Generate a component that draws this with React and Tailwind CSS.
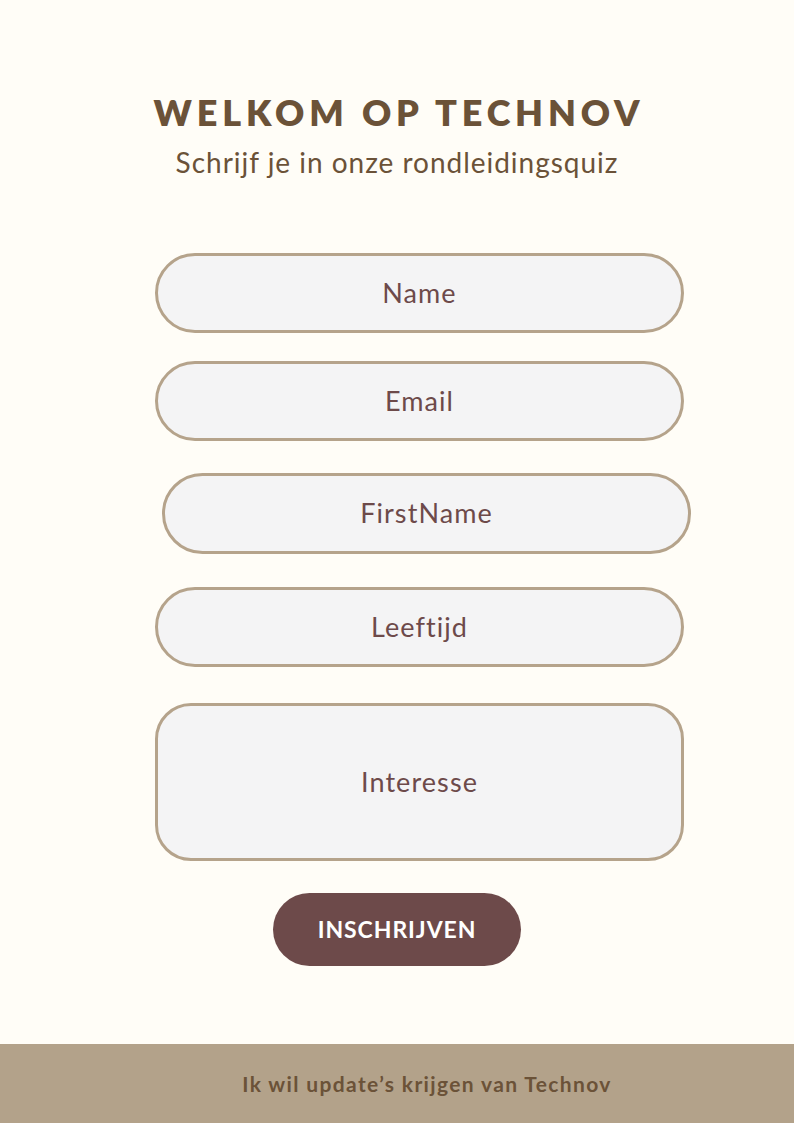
import React from "react";

const fields = [
  { label: "Name", ml: "ml-[155px]", mt: "mt-[73px]", h: "h-[80px]" },
  { label: "Email", ml: "ml-[155px]", mt: "mt-[28px]", h: "h-[80px]" },
  { label: "FirstName", ml: "ml-[162px]", mt: "mt-[32px]", h: "h-[81px]" },
  { label: "Leeftijd", ml: "ml-[155px]", mt: "mt-[33px]", h: "h-[80px]" },
];

export default function App() {
  return (
    <div className="w-[794px] h-[1123px] bg-[#fffdf7] flex flex-col font-['Lato',sans-serif] overflow-hidden">
      <div className="flex-1 flex flex-col">
        <h1 className="mt-[90px] text-center text-[36px] leading-[44px] font-extrabold tracking-[0.135em] text-[#6b5238] pl-[4px]">
          WELKOM OP TECHNOV
        </h1>
        <p className="mt-[10px] text-center text-[28px] leading-[36px] text-[#6b5238] tracking-[0.035em]">
          Schrijf je in onze rondleidingsquiz
        </p>

        {fields.map((f) => (
          <div
            key={f.label}
            className={`${f.ml} ${f.mt} ${f.h} w-[529px] rounded-full border-[3px] border-[#b5a38b] bg-[#f4f4f5] flex items-center justify-center text-[27px] text-[#6d4a4a] tracking-[0.04em]`}
          >
            {f.label}
          </div>
        ))}

        <div className="ml-[155px] mt-[36px] h-[158px] w-[529px] rounded-[36px] border-[3px] border-[#b5a38b] bg-[#f4f4f5] flex items-center justify-center text-[27px] text-[#6d4a4a] tracking-[0.04em]">
          Interesse
        </div>

        <button className="mx-auto mt-[32px] w-[248px] h-[73px] rounded-full bg-[#6d4a4a] text-white text-[23px] font-bold tracking-[0.04em]">
          INSCHRIJVEN
        </button>
      </div>

      <div className="h-[79px] bg-[#b3a28a] flex items-center justify-center pl-[60px]">
        <span className="text-[21px] font-bold text-[#6b5238] tracking-[0.065em]">
          Ik wil update’s krijgen van Technov
        </span>
      </div>
    </div>
  );
}
